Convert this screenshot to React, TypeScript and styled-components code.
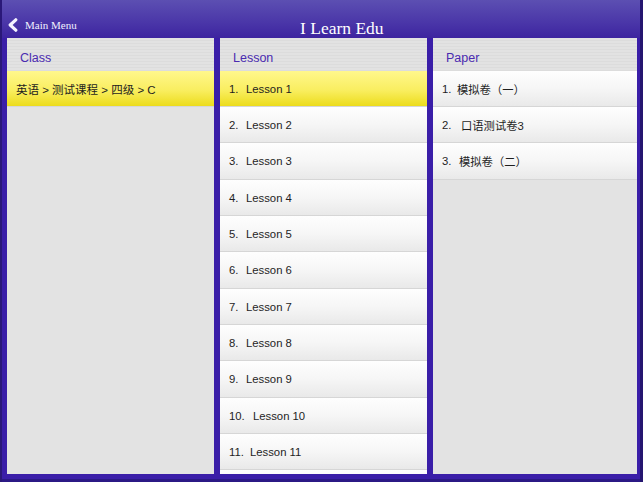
import styled, { createGlobalStyle } from 'styled-components';

const GlobalStyle = createGlobalStyle`
  html, body {
    margin: 0;
    padding: 0;
    background: #3b1fa6;
  }
`;

const Page = styled.div`
  width: 643px;
  height: 482px;
  box-sizing: border-box;
  display: flex;
  flex-direction: column;
  background: #3a1ea8;
  border-left: 2px solid #2a1878;
  border-right: 3px solid #251670;
  overflow: hidden;
`;

const Header = styled.div`
  height: 38px;
  flex: none;
  display: flex;
  align-items: flex-end;
  position: relative;
  background: linear-gradient(#5c4fb2, #4a36a8 60%, #3d24a0);
`;

const Back = styled.div`
  display: flex;
  align-items: center;
  gap: 6px;
  padding: 0 0 6px 5px;
  color: #f2f0ff;
  font-family: 'Liberation Serif', 'Times New Roman', serif;
  font-size: 11px;
  svg {
    display: block;
  }
`;

const Title = styled.div`
  position: absolute;
  left: 298px;
  bottom: 0;
  color: #ffffff;
  font-family: 'Liberation Serif', 'Times New Roman', serif;
  font-size: 17.5px;
  line-height: 20px;
`;

const Columns = styled.div`
  flex: 1;
  display: grid;
  grid-template-columns: 207px 207px 204px;
  column-gap: 6px;
  padding: 0 3px 5px 5px;
  min-height: 0;
  border-bottom: 3px solid #2b1985;
`;

const Panel = styled.div`
  background: #e3e3e3;
  display: flex;
  flex-direction: column;
  overflow: hidden;
`;

const PanelHead = styled.div`
  height: 32.5px;
  flex: none;
  display: flex;
  align-items: center;
  padding: 7px 0 0 13px;
  box-sizing: border-box;
  color: #4a2bb0;
  font-family: 'Liberation Sans', Arial, sans-serif;
  font-size: 12.5px;
  background: repeating-linear-gradient(#e2e2e2 0 2px, #dcdcdc 2px 3px);
`;

const Row = styled.div<{ $selected?: boolean; $size?: number }>`
  height: 36.35px;
  flex: none;
  box-sizing: border-box;
  display: flex;
  align-items: center;
  padding: 1px 0 0 9px;
  color: #1e1e1e;
  font-family: 'Liberation Sans', Arial, 'Noto Sans CJK SC', sans-serif;
  font-size: ${(p) => p.$size ?? 11.3}px;
  white-space: nowrap;
  border-bottom: 1px solid #d6d6d6;
  background: ${(p) =>
    p.$selected
      ? 'linear-gradient(#fff78c, #f9ee60 55%, #ecdc1c)'
      : 'linear-gradient(#fefefe, #f6f6f6 50%, #e9e9e9)'};
`;

const Num = styled.span<{ $w: number }>`
  display: inline-block;
  min-width: ${(p) => p.$w}px;
`;

const lessons = Array.from({ length: 12 }, (_, i) => i + 1);
const papers = [
  { name: '模拟卷（一）', w: 15 },
  { name: '口语测试卷3', w: 19 },
  { name: '模拟卷（二）', w: 17 },
];

const lessonGap = (n: number) => (n === 10 ? 24 : n >= 11 ? 21 : 17);

const App = () => {
  return (
    <Page>
      <GlobalStyle />
      <Header>
        <Back>
          <svg width="12" height="14" viewBox="0 0 12 14">
            <path d="M8.8 1.8 L3.2 7 L8.8 12.2" fill="none" stroke="#f4f2ff" strokeWidth="3.2" strokeLinecap="round" strokeLinejoin="round" />
          </svg>
          <span>Main Menu</span>
        </Back>
        <Title>I Learn Edu</Title>
      </Header>
      <Columns>
        <Panel>
          <PanelHead>Class</PanelHead>
          <Row $selected $size={11.5}>英语 &gt; 测试课程 &gt; 四级 &gt; C</Row>
        </Panel>
        <Panel>
          <PanelHead>Lesson</PanelHead>
          {lessons.map((n) => (
            <Row key={n} $selected={n === 1}>
              <Num $w={lessonGap(n)}>{n}.</Num>
              Lesson {n}
            </Row>
          ))}
        </Panel>
        <Panel>
          <PanelHead>Paper</PanelHead>
          {papers.map((p, i) => (
            <Row key={p.name}>
              <Num $w={p.w}>{i + 1}.</Num>
              {p.name}
            </Row>
          ))}
        </Panel>
      </Columns>
    </Page>
  );
};

export default App;
